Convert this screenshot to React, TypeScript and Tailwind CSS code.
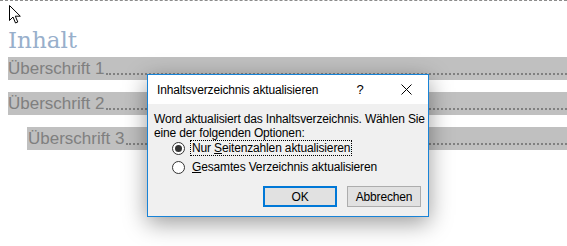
import { useState } from 'react'

const entries = [
  { label: 'Überschrift 1', indent: false },
  { label: 'Überschrift 2', indent: false },
  { label: 'Überschrift 3', indent: true },
]

// Eintrag im Inhaltsverzeichnis mit Punkt-Füllzeichen
function TocRow({ label, indent }: { label: string; indent: boolean }) {
  return (
    <div
      className={`flex h-[23px] items-end bg-[#c0c0c0] text-[17px] leading-[23px] text-[#7f7f7f] ${indent ? 'ml-[27px] pl-[1px]' : 'ml-[8px]'}`}
    >
      <span className="whitespace-nowrap">{label}</span>
      <span className="mb-[5px] ml-[2px] flex-1 border-b-2 border-dotted border-[#808080]" />
    </div>
  )
}

function Radio({ checked }: { checked: boolean }) {
  return (
    <span className="flex h-[13px] w-[13px] items-center justify-center rounded-full border border-[#333333] bg-white">
      {checked && <span className="h-[7px] w-[7px] rounded-full bg-[#333333]" />}
    </span>
  )
}

export default function App() {
  const [option, setOption] = useState<'pages' | 'all'>('pages')

  return (
    <main
      className="relative h-[246px] w-[567px] overflow-hidden bg-white"
      style={{ fontFamily: '"Liberation Sans", Arial, sans-serif' }}
    >
      <div className="border-t border-dashed border-[#8c8c8c]" />

      {/* Mauszeiger */}
      <svg className="absolute left-[9px] top-[5px]" width="13" height="19" viewBox="0 0 13 19">
        <path
          d="M0.5 0.5 L0.5 15.5 L4 12 L6.5 18 L8.8 17 L6.3 11.2 L11.3 11.2 Z"
          fill="white"
          stroke="black"
          strokeWidth="1"
          strokeLinejoin="miter"
        />
      </svg>

      <h1
        className="ml-[8px] mt-[24px] text-[23px] leading-[30px] text-[#98afcb]"
        style={{ fontFamily: '"DejaVu Serif", serif' }}
      >
        Inhalt
      </h1>

      <div className="mt-[2px] flex flex-col gap-[12px]">
        {entries.map((e) => (
          <TocRow key={e.label} label={e.label} indent={e.indent} />
        ))}
      </div>

      {/* Dialog */}
      <div className="absolute left-[147px] top-[74px] w-[282px] border border-[#1883d7] bg-[#f0f0f0] text-[12px] tracking-[-0.15px] text-black shadow-[0_6px_22px_rgba(0,0,0,0.4)]">
        <div className="flex h-[29px] items-center bg-white pl-[9px]">
          <span className="flex-1 whitespace-nowrap">Inhaltsverzeichnis aktualisieren</span>
          <span className="w-[20px] text-center text-[13px]">?</span>
          <span className="ml-[30px] mr-[16px] flex h-[12px] w-[12px] items-center justify-center">
            <svg width="11" height="11" viewBox="0 0 11 11">
              <path d="M0.5 0.5 L10.5 10.5 M10.5 0.5 L0.5 10.5" stroke="black" strokeWidth="1" />
            </svg>
          </span>
        </div>

        <div className="whitespace-nowrap px-[6px] pt-[8px] leading-[14px]">
          <p>Word aktualisiert das Inhaltsverzeichnis. Wählen Sie</p>
          <p>eine der folgenden Optionen:</p>
        </div>

        <div className="flex flex-col gap-[3px] pl-[24px]">
          <button className="flex items-center gap-[5px]" onClick={() => setOption('pages')}>
            <Radio checked={option === 'pages'} />
            <span className="border border-dotted border-black px-[1px] leading-[14px]">
              Nur <span className="underline">S</span>eitenzahlen aktualisieren
            </span>
          </button>
          <button className="flex items-center gap-[5px]" onClick={() => setOption('all')}>
            <Radio checked={option === 'all'} />
            <span className="border border-transparent px-[1px] leading-[14px]">
              <span className="underline">G</span>esamtes Verzeichnis aktualisieren
            </span>
          </button>
        </div>

        <div className="mb-[9px] mt-[11px] flex justify-end gap-[10px] pr-[7px]">
          <button className="h-[21px] w-[74px] border-2 border-[#0078d7] bg-[#e1e1e1]">OK</button>
          <button className="h-[21px] w-[74px] border border-[#adadad] bg-[#e1e1e1]">Abbrechen</button>
        </div>
      </div>
    </main>
  )
}
